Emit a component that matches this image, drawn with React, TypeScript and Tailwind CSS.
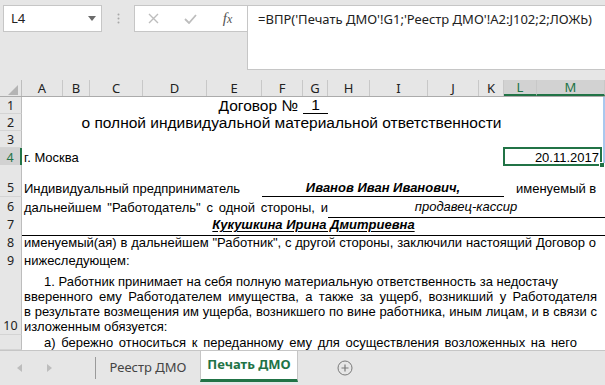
import React from "react";

const COLS =
  "grid grid-cols-[22px_41px_27px_53px_64px_55px_41px_25px_42px_58px_51px_25px_33px_1fr]";
const UI = "font-['Noto_Sans','Open_Sans',sans-serif]";
const SHEET = "font-['Liberation_Sans',Arial,sans-serif] text-[13px] text-black";

const LETTERS = ["A", "B", "C", "D", "E", "F", "G", "H", "I", "J", "K", "L", "M"];

function Row({
  h,
  n,
  sel,
  bottom,
  children,
}: {
  h: string;
  n?: string;
  sel?: boolean;
  bottom?: boolean;
  children?: React.ReactNode;
}) {
  return (
    <div className={`${COLS} ${h}`}>
      <div
        className={`col-start-1 flex justify-center border-b border-b-[#d4d4d4] text-[12.5px] leading-[13px] ${UI} ${
          bottom ? "items-end pb-[2px]" : "items-center"
        } ${
          sel
            ? "bg-[#d2d2d2] text-[#217346] border-r-2 border-r-[#217346]"
            : "bg-[#e6e6e6] text-[#222] border-r border-r-[#bdbdbd]"
        }`}
      >
        {n}
      </div>
      {children}
    </div>
  );
}

function TopBar() {
  return (
    <div className={`h-[80px] bg-[#e6e6e6] flex items-start pt-[5px] ${UI}`}>
      <div className="ml-[3px] w-[99px] h-[27px] bg-white border border-[#c6c6c6] flex items-center justify-between pl-[7px] pr-[5px] text-[13px] text-[#222]">
        <span>L4</span>
        <svg width="8" height="5" viewBox="0 0 8 5">
          <path d="M0 0h8L4 5z" fill="#6b6b6b" />
        </svg>
      </div>
      <div className="w-[32px] flex justify-center pt-[8px]">
        <svg width="3" height="11" viewBox="0 0 3 11">
          <circle cx="1.5" cy="1.5" r="1" fill="#a8a8a8" />
          <circle cx="1.5" cy="5.5" r="1" fill="#a8a8a8" />
          <circle cx="1.5" cy="9.5" r="1" fill="#a8a8a8" />
        </svg>
      </div>
      <div className="w-[113px] h-[27px] bg-white border border-r-0 border-[#c6c6c6] flex items-center">
        <div className="w-[37px] flex justify-center">
          <svg width="11" height="11" viewBox="0 0 11 11">
            <path d="M1 1l9 9M10 1l-9 9" stroke="#bdbdbd" strokeWidth="1.4" />
          </svg>
        </div>
        <div className="w-[37px] flex justify-center">
          <svg width="13" height="10" viewBox="0 0 13 10">
            <path d="M1 5l4 4 7-8" stroke="#bdbdbd" strokeWidth="1.8" fill="none" />
          </svg>
        </div>
        <div className="w-[37px] flex justify-center font-['Liberation_Serif',serif] italic text-[15px] text-[#555] leading-none">
          f<span className="text-[12px] translate-y-[2px] inline-block">x</span>
        </div>
      </div>
      <div className="flex-1 h-[65px] bg-white border border-r-0 border-[#c6c6c6] pl-[10px] pt-[4px] text-[13px] text-[#222] whitespace-nowrap">
        =ВПР('Печать ДМО'!G1;'Реестр ДМО'!A2:J102;2;ЛОЖЬ)
      </div>
    </div>
  );
}

function ColumnHeader() {
  return (
    <div className={`${COLS} h-[17px] bg-[#e6e6e6] border-b border-[#ababab] ${UI}`}>
      <div className="flex items-end justify-end pr-[3px] pb-[1px] border-r border-[#bdbdbd]">
        <svg width="10" height="10" viewBox="0 0 10 10">
          <path d="M10 0v10H0z" fill="#b4b4b4" />
        </svg>
      </div>
      {LETTERS.map((l) => {
        const sel = l === "L" || l === "M";
        return (
          <div
            key={l}
            className={`flex items-center justify-center border-r border-[#c8c8c8] text-[13px] leading-none ${
              sel ? "bg-[#d2d2d2] text-[#217346] border-b-2 border-b-[#217346]" : "text-[#222]"
            }`}
          >
            {l}
          </div>
        );
      })}
    </div>
  );
}

function Sheet() {
  const justifyAll = "text-justify [text-align-last:justify] whitespace-nowrap";
  return (
    <div className={`relative bg-white h-[253px] overflow-hidden ${SHEET}`}>
      <Row h="h-[17px]" n="1">
        <div className="col-start-5 col-span-3 flex items-center justify-end pr-[5px] text-[15.5px] leading-[16px] whitespace-nowrap">
          Договор №
        </div>
        <div className="col-start-8 col-span-1 flex items-center justify-center text-[15.5px] leading-[16px] border-b border-black">
          1
        </div>
      </Row>
      <Row h="h-[17px]" n="2">
        <div className="col-start-2 col-span-13 flex items-center justify-center pr-[44px] text-[15.5px] leading-[16px] whitespace-nowrap">
          о полной индивидуальной материальной ответственности
        </div>
      </Row>
      <Row h="h-[17px]" n="3" />
      <Row h="h-[17px]" n="4" sel>
        <div className="col-start-2 col-span-4 flex items-center pl-[2px] whitespace-nowrap">г. Москва</div>
        <div className="col-start-13 col-span-2 flex items-center justify-end pr-[6px]">20.11.2017</div>
      </Row>
      <Row h="h-[32px]" n="5" bottom>
        <div className="col-start-2 col-span-5 flex items-end pl-[2px] pb-[1px] leading-[15px] whitespace-nowrap">
          Индивидуальный предприниматель
        </div>
        <div className="col-start-7 col-span-6 flex items-end justify-center pb-[1px] leading-[15px] font-bold italic border-b border-black whitespace-nowrap">
          Иванов Иван Иванович,
        </div>
        <div className="col-start-13 col-span-2 flex items-end pl-[12px] pb-[1px] leading-[15px] whitespace-nowrap">
          именуемый в
        </div>
      </Row>
      <Row h="h-[18px]" n="6">
        <div className="col-start-2 col-span-7 flex items-center pl-[2px]">
          <div className={`w-[314px] ${justifyAll}`}>дальнейшем "Работодатель" с одной стороны, и</div>
        </div>
        <div className="col-start-9 col-span-6 flex items-center justify-center pr-[1px] italic border-b border-black whitespace-nowrap">
          продавец-кассир
        </div>
      </Row>
      <Row h="h-[18px]" n="7">
        <div className="col-start-2 col-span-13 flex items-center justify-center border-b border-black font-bold italic underline underline-offset-[2px] whitespace-nowrap">
          Кукушкина Ирина Дмитриевна
        </div>
      </Row>
      <Row h="h-[18px]" n="8">
        <div className="col-start-2 col-span-13 flex items-center pl-[2px] pr-[9px]">
          <div className={`w-full ${justifyAll}`}>
            именуемый(ая) в дальнейшем "Работник", с другой стороны, заключили настоящий Договор о
          </div>
        </div>
      </Row>
      <Row h="h-[17px]" n="9">
        <div className="col-start-2 col-span-13 flex items-center pl-[2px]">нижеследующем:</div>
      </Row>
      <Row h="h-[67px]" n="10" bottom>
        <div className="col-start-2 col-span-13 flex flex-col justify-end pl-[2px] pr-[8px] pb-[1px] leading-[15px]">
          <div className="pl-[20px] whitespace-nowrap">
            1. Работник принимает на себя полную материальную ответственность за недостачу
          </div>
          <div className={justifyAll}>
            вверенного ему Работодателем имущества, а также за ущерб, возникший у Работодателя
          </div>
          <div className={justifyAll}>
            в результате возмещения им ущерба, возникшего по вине работника, иным лицам, и в связи с
          </div>
          <div className="whitespace-nowrap">изложенным обязуется:</div>
        </div>
      </Row>
      <Row h="h-[15px]">
        <div className="col-start-2 col-span-13 flex items-center pl-[22px] leading-[15px]">
          <div className={`w-[533px] ${justifyAll}`}>
            а) бережно относиться к переданному ему для осуществления возложенных на него
          </div>
        </div>
      </Row>

      {/* active cell selection L4:M4 */}
      <div className="absolute left-[503px] top-[50px] w-[99px] h-[19px] border-2 border-[#217346]" />
      <div className="absolute left-[599px] top-[65px] w-[6px] h-[6px] bg-[#217346] border border-white" />
      <div className="absolute left-[603px] top-0 w-[2px] h-[66px] bg-[#a9c8ee]" />
    </div>
  );
}

function Tabs() {
  return (
    <div className={`h-[35px] bg-[#e6e6e6] border-t border-[#c6c6c6] flex items-stretch text-[13px] ${UI}`}>
      <div className="w-[95px] flex items-center">
        <svg className="ml-[17px]" width="5" height="8" viewBox="0 0 5 8">
          <path d="M5 0v8L0 4z" fill="#bdbdbd" />
        </svg>
        <svg className="ml-[25px]" width="5" height="8" viewBox="0 0 5 8">
          <path d="M0 0v8l5-4z" fill="#bdbdbd" />
        </svg>
      </div>
      <div className="w-px bg-[#9a9a9a] my-[6px]" />
      <div className="w-[104px] flex items-center justify-center text-[#444]">Реестр ДМО</div>
      <div className="w-[98px] mb-[3px] bg-white border-x border-[#c6c6c6] border-b-[3px] border-b-[#217346] flex items-center justify-center font-bold text-[#217346]">
        Печать ДМО
      </div>
      <div className="flex items-center pl-[39px]">
        <svg width="16" height="16" viewBox="0 0 16 16">
          <circle cx="8" cy="8" r="7" fill="none" stroke="#7a7a7a" strokeWidth="1" />
          <path d="M8 4.5v7M4.5 8h7" stroke="#7a7a7a" strokeWidth="1.2" />
        </svg>
      </div>
    </div>
  );
}

export default function App() {
  return (
    <div className="w-[605px] h-[385px] overflow-hidden bg-[#e6e6e6]">
      <TopBar />
      <ColumnHeader />
      <Sheet />
      <Tabs />
    </div>
  );
}
